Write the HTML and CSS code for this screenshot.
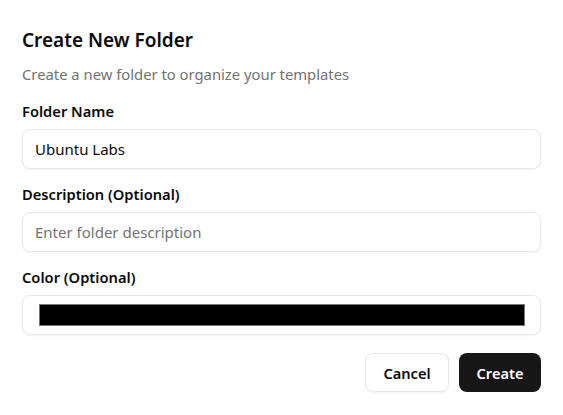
FILE: index.html
```html
<!DOCTYPE html>
<html lang="en">
<head>
<meta charset="utf-8">
<title>Create New Folder</title>
<link rel="stylesheet" href="styles.css">
</head>
<body>
<div class="dialog">
  <div class="header">
    <h2 class="title">Create New Folder</h2>
    <p class="subtitle">Create a new folder to organize your templates</p>
  </div>
  <form class="form">
    <div class="field">
      <label class="label">Folder Name</label>
      <div class="input">Ubuntu Labs</div>
    </div>
    <div class="field">
      <label class="label">Description (Optional)</label>
      <div class="input placeholder">Enter folder description</div>
    </div>
    <div class="field">
      <label class="label">Color (Optional)</label>
      <div class="input color-input"><span class="swatch"></span></div>
    </div>
  </form>
  <div class="footer">
    <button class="btn btn-outline" type="button">Cancel</button>
    <button class="btn btn-primary" type="button">Create</button>
  </div>
</div>
</body>
</html>
```

FILE: styles.css
```css
* { box-sizing: border-box; }
html, body { margin: 0; padding: 0; background: #ffffff; }
body {
  font-family: "Noto Sans", "Open Sans", sans-serif;
  color: #0a0a0a;
  width: 563px;
  height: 415px;
  overflow: hidden;
}
.dialog {
  padding: 26px 22px 0 22px;
  display: flex;
  flex-direction: column;
}
.header {
  display: flex;
  flex-direction: column;
  gap: 10px;
}
.title {
  margin: 0;
  font-size: 19px;
  line-height: 28px;
  font-weight: 600;
}
.subtitle {
  margin: 0;
  font-size: 14.8px;
  line-height: 20px;
  color: #737373;
}
.form {
  margin-top: 17px;
  display: flex;
  flex-direction: column;
  gap: 15px;
}
.field {
  display: flex;
  flex-direction: column;
  gap: 8px;
}
.label {
  font-size: 14.7px;
  line-height: 20px;
  font-weight: 600;
}
.input {
  height: 40px;
  border: 1px solid #e8e8e8;
  border-radius: 8px;
  box-shadow: 0 1px 2px rgba(0,0,0,0.05);
  padding: 0 12px;
  display: flex;
  align-items: center;
  font-size: 15px;
  color: #0a0a0a;
}
.placeholder { color: #737373; }
.color-input {
  padding: 0 15px 0 16px;
}
.swatch {
  flex: 1;
  height: 22px;
  background: #000000;
  border: 1px solid #777777;
}
.footer {
  margin-top: 18px;
  display: flex;
  justify-content: flex-end;
  gap: 10px;
}
.btn {
  height: 39px;
  border-radius: 8px;
  font-family: inherit;
  font-size: 14.6px;
  font-weight: 600;
  padding: 0;
  cursor: pointer;
}
.btn-outline {
  background: #ffffff;
  color: #0a0a0a;
  border: 1px solid #e8e8e8;
  box-shadow: 0 1px 2px rgba(0,0,0,0.05);
  width: 84px;
}
.btn-primary {
  background: #171717;
  color: #ffffff;
  border: none;
  width: 82px;
}
```
